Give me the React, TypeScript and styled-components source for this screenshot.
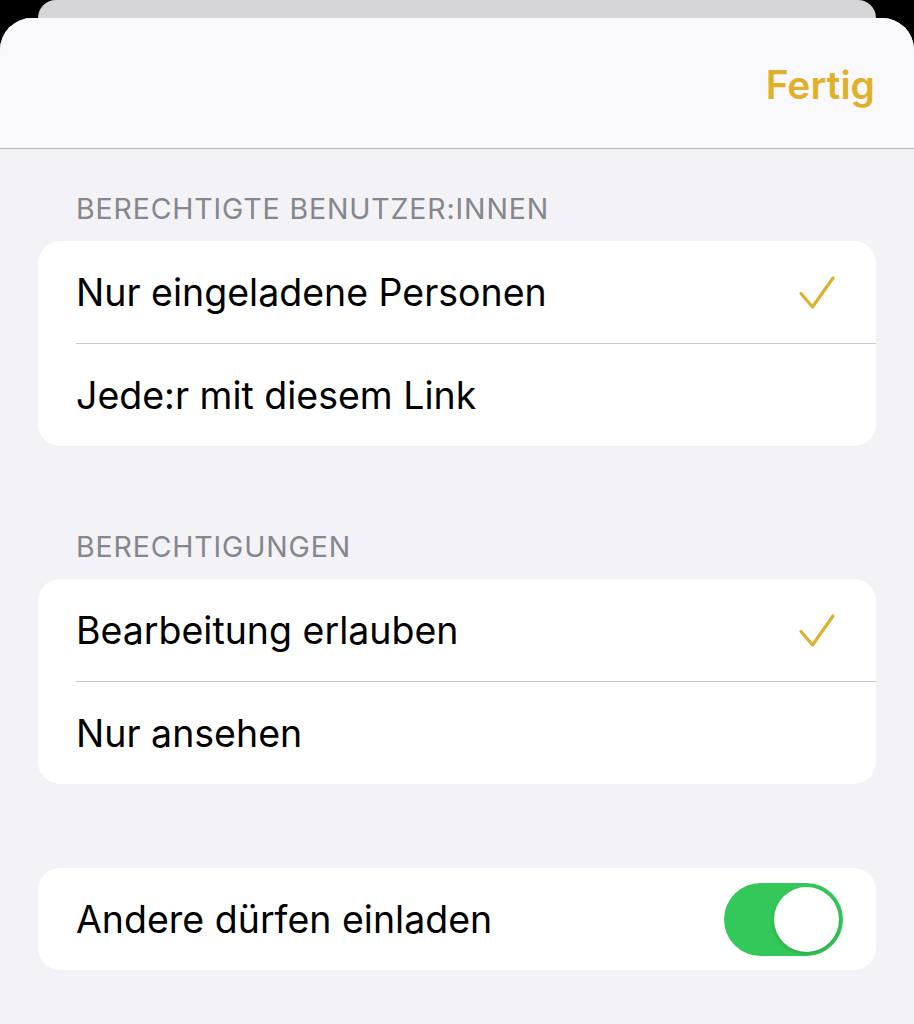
import styled, { createGlobalStyle } from 'styled-components';
import { useState } from 'react';

const GlobalStyle = createGlobalStyle`
  html, body {
    margin: 0;
    padding: 0;
    background: #000;
  }
  body {
    font-family: Inter, "Liberation Sans", "Noto Sans", sans-serif;
    -webkit-font-smoothing: antialiased;
  }
`;

const Screen = styled.div`
  width: 914px;
  height: 1024px;
  overflow: hidden;
  background: #000;
  display: flex;
  flex-direction: column;
`;

const BackSheet = styled.div`
  height: 18px;
  margin: 0 38px;
  background: #d5d5d7;
  border-radius: 18px 18px 0 0;
  flex-shrink: 0;
`;

const Sheet = styled.div`
  flex: 1;
  background: #f2f2f7;
  border-radius: 32px 32px 0 0;
  overflow: hidden;
  display: flex;
  flex-direction: column;
`;

const NavBar = styled.div`
  height: 131px;
  flex-shrink: 0;
  background: #f9f9fb;
  border-bottom: 1px solid #b6b6ba;
  display: flex;
  align-items: center;
  justify-content: flex-end;
  padding: 2px 39px 0 0;
  box-sizing: border-box;
`;

const DoneButton = styled.button`
  border: 0;
  background: none;
  padding: 0;
  font-family: inherit;
  font-size: 39px;
  font-weight: 600;
  letter-spacing: 0;
  color: #dfb12b;
  cursor: pointer;
`;

const Content = styled.div`
  display: flex;
  flex-direction: column;
  padding: 0 38px;
`;

const SectionTitle = styled.div<{ $gapTop: number }>`
  font-size: 28.5px;
  line-height: 34px;
  color: #86868b;
  letter-spacing: 0.85px;
  padding-left: 38px;
  margin: ${p => p.$gapTop}px 0 15px;
`;

const Card = styled.div<{ $gapTop?: number }>`
  background: #fff;
  border-radius: 22px;
  overflow: hidden;
  margin-top: ${p => p.$gapTop ?? 0}px;
`;

const Row = styled.div<{ $divider?: boolean }>`
  height: ${p => (p.$divider ? 103 : 102)}px;
  display: flex;
  align-items: center;
  justify-content: space-between;
  padding: 0 33px 0 38px;
  position: relative;
  box-sizing: border-box;
  ${p => p.$divider && `
    &::after {
      content: '';
      position: absolute;
      left: 38px;
      right: 0;
      bottom: 0;
      height: 1px;
      background: #c8c8cc;
    }
  `}
`;

const RowLabel = styled.span`
  font-size: 37.5px;
  letter-spacing: 0;
  color: #000;
`;

const Check = styled.svg`
  width: 38px;
  height: 36px;
  margin-right: 7px;
`;

const Toggle = styled.button<{ $on: boolean }>`
  width: 119px;
  height: 73px;
  border: 0;
  padding: 0;
  border-radius: 37px;
  background: ${p => (p.$on ? '#34c759' : '#e9e9eb')};
  position: relative;
  cursor: pointer;
`;

const Knob = styled.span<{ $on: boolean }>`
  position: absolute;
  top: 4px;
  left: ${p => (p.$on ? '50px' : '4px')};
  width: 65px;
  height: 65px;
  border-radius: 50%;
  background: #fff;
  box-shadow: 0 2px 4px rgba(0, 0, 0, 0.15);
`;

const CheckMark = () => (
  <Check viewBox="0 0 38 36" fill="none">
    <path
      d="M3 18.5 L14.5 32 L35 3"
      stroke="#dcb12e"
      strokeWidth="3.2"
      strokeLinecap="round"
      strokeLinejoin="round"
    />
  </Check>
);

export default function App() {
  const [access, setAccess] = useState('invited');
  const [perm, setPerm] = useState('edit');
  const [invite, setInvite] = useState(true);

  return (
    <>
      <GlobalStyle />
      <Screen>
        <BackSheet />
        <Sheet>
          <NavBar>
            <DoneButton>Fertig</DoneButton>
          </NavBar>
          <Content>
            <SectionTitle $gapTop={43}>BERECHTIGTE BENUTZER:INNEN</SectionTitle>
            <Card>
              <Row $divider onClick={() => setAccess('invited')}>
                <RowLabel>Nur eingeladene Personen</RowLabel>
                {access === 'invited' && <CheckMark />}
              </Row>
              <Row onClick={() => setAccess('link')}>
                <RowLabel>Jede:r mit diesem Link</RowLabel>
                {access === 'link' && <CheckMark />}
              </Row>
            </Card>

            <SectionTitle $gapTop={84}>BERECHTIGUNGEN</SectionTitle>
            <Card>
              <Row $divider onClick={() => setPerm('edit')}>
                <RowLabel>Bearbeitung erlauben</RowLabel>
                {perm === 'edit' && <CheckMark />}
              </Row>
              <Row onClick={() => setPerm('view')}>
                <RowLabel>Nur ansehen</RowLabel>
                {perm === 'view' && <CheckMark />}
              </Row>
            </Card>

            <Card $gapTop={84}>
              <Row>
                <RowLabel>Andere dürfen einladen</RowLabel>
                <Toggle $on={invite} onClick={() => setInvite(!invite)}>
                  <Knob $on={invite} />
                </Toggle>
              </Row>
            </Card>
          </Content>
        </Sheet>
      </Screen>
    </>
  );
}
